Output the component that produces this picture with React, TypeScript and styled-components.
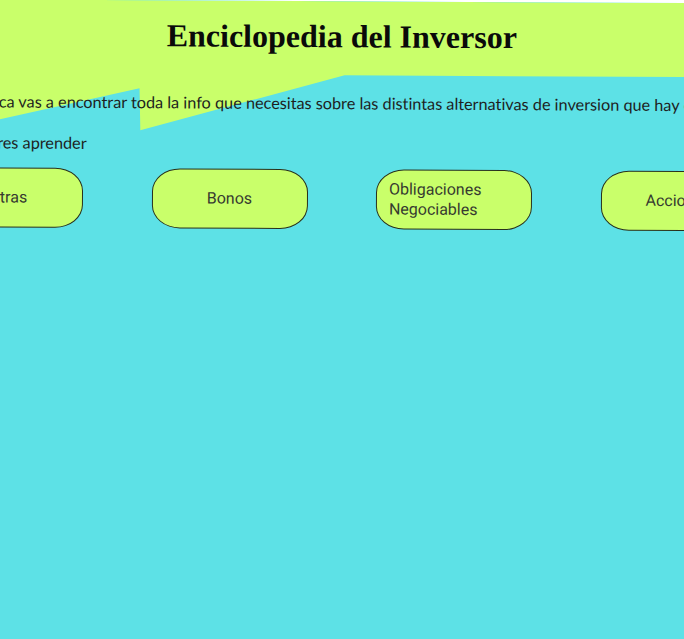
import React from "react";
import styled, { createGlobalStyle } from "styled-components";

const GlobalStyle = createGlobalStyle`
  html, body {
    margin: 0;
    padding: 0;
    background: #ffffff;
    overflow: hidden;
  }
  #root {
    width: 684px;
    height: 639px;
    overflow: hidden;
  }
`;

const Page = styled.div`
  position: relative;
  width: 720px;
  min-height: 680px;
  background: #5de1e6;
  transform: rotate(0.3deg);
  transform-origin: 100px 0;
`;

const Decoration = styled.svg`
  position: absolute;
  top: 0;
  left: 0;
  width: 720px;
  height: 140px;
  z-index: 0;
`;

const Content = styled.div`
  position: relative;
  z-index: 1;
  width: 684px;
  padding-top: 17px;
`;

const Title = styled.h1`
  margin: 0;
  font-family: "Liberation Serif", "Times New Roman", serif;
  font-weight: 700;
  font-size: 32px;
  line-height: 37px;
  color: #0a0a0a;
  text-align: center;
`;

const Lead = styled.p<{ $gap: number; $shift: number }>`
  margin: ${(p) => p.$gap}px 0 0 ${(p) => p.$shift}px;
  font-family: Lato, "Open Sans", sans-serif;
  font-size: 16.25px;
  font-variant-ligatures: none;
  line-height: 24px;
  color: #1e1e1e;
  white-space: nowrap;
`;

const CardRow = styled.div`
  display: flex;
  gap: 68.5px;
  margin: 12.5px 0 0 -72px;
`;

const Card = styled.div`
  flex: 0 0 auto;
  box-sizing: border-box;
  width: 156px;
  height: 60px;
  padding: 0 12px;
  display: flex;
  align-items: center;
  justify-content: center;
  background: #c9ff6a;
  border: 1px solid #28301c;
  border-radius: 28px / 23px;
  font-family: Roboto, "Noto Sans", sans-serif;
  font-size: 16px;
  line-height: 20px;
  color: #363a30;
  text-align: left;
`;

const cards = ["Letras", "Bonos", "Obligaciones Negociables", "Acciones"];

export default function App() {
  return (
    <>
      <GlobalStyle />
      <Page>
        <Decoration viewBox="0 0 720 140" aria-hidden="true">
          <polygon
            fill="#c9ff6a"
            points="0,0 720,0 720,74 345,74 141,130 140,88 0,120"
          />
        </Decoration>
        <Content>
          <Title>Enciclopedia del Inversor</Title>
          <Lead $gap={36} $shift={-110}>
            En esta biblioteca vas a encontrar toda la info que necesitas sobre las distintas alternativas de inversion que hay en el mercado
          </Lead>
          <Lead $gap={17} $shift={-119}>
            Elegí lo que quieres aprender
          </Lead>
          <CardRow>
            {cards.map((c) => (
              <Card key={c}>
                <span>{c}</span>
              </Card>
            ))}
          </CardRow>
        </Content>
      </Page>
    </>
  );
}
